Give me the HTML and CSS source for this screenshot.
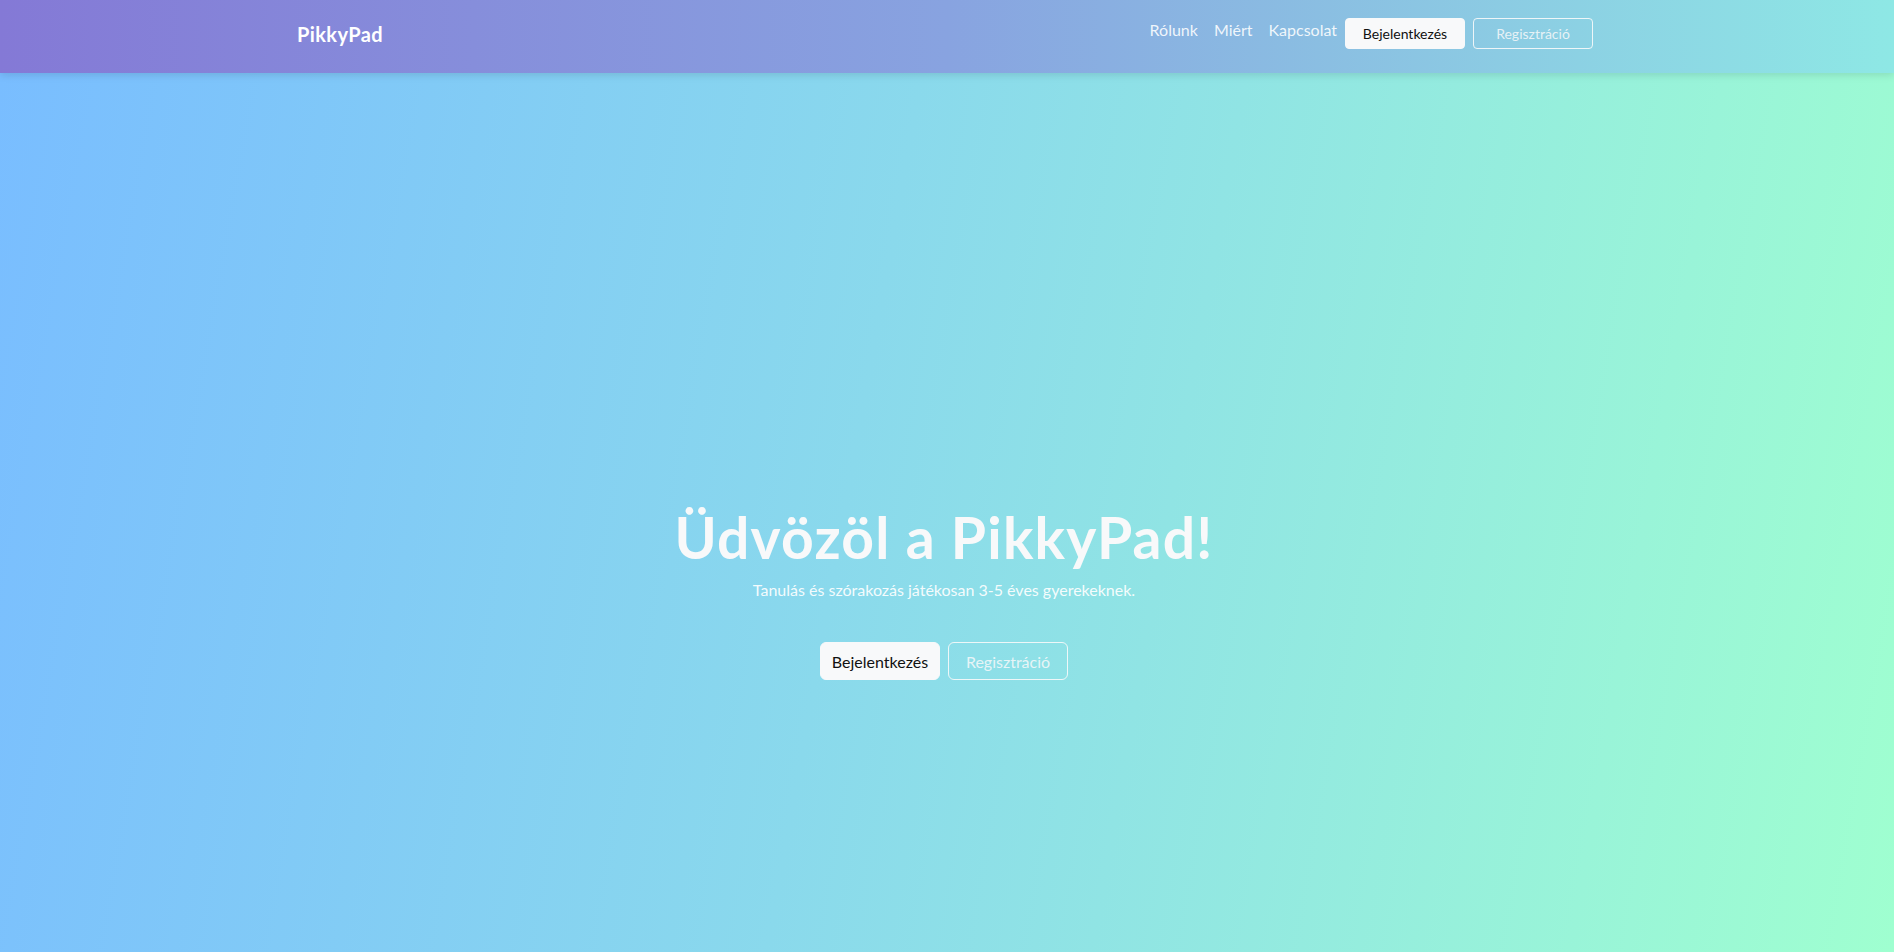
FILE: index.html
```html
<!DOCTYPE html>
<html lang="hu">
<head>
<meta charset="utf-8">
<title>PikkyPad</title>
<link rel="stylesheet" href="styles.css">
</head>
<body>
<header class="navbar">
  <div class="container nav-inner">
    <a class="brand" href="#">PikkyPad</a>
    <nav class="nav">
      <a class="nav-link" href="#">Rólunk</a>
      <a class="nav-link" href="#">Miért</a>
      <a class="nav-link" href="#">Kapcsolat</a>
      <a class="btn btn-light btn-sm" href="#">Bejelentkezés</a>
      <a class="btn btn-outline btn-sm" href="#">Regisztráció</a>
    </nav>
  </div>
</header>
<main class="hero">
  <h1 class="hero-title">Üdvözöl a PikkyPad!</h1>
  <p class="hero-lead">Tanulás és szórakozás játékosan 3-5 éves gyerekeknek.</p>
  <div class="hero-actions">
    <a class="btn btn-light btn-lg" href="#">Bejelentkezés</a>
    <a class="btn btn-outline btn-lg" href="#">Regisztráció</a>
  </div>
</main>
</body>
</html>
```
FILE: styles.css
```css
* { box-sizing: border-box; }
html, body { height: 100%; }
body {
  margin: 0;
  font-family: Lato, "Open Sans", sans-serif;
  color: #212529;
  overflow: hidden;
}
a { text-decoration: none; }

.navbar {
  position: relative;
  z-index: 2;
  height: 73px;
  background: linear-gradient(90deg, #8479d6 0%, #88a3e0 50%, #8ee8e5 100%);
  box-shadow: 0 2px 8px rgba(0, 0, 0, 0.12);
}
.container {
  width: 1320px;
  margin: 0 auto;
  padding: 0 12px;
}
.nav-inner {
  display: flex;
  justify-content: space-between;
  align-items: flex-start;
  padding-top: 18px;
}
.brand {
  margin-top: 1px;
  margin-left: -2px;
  font-size: 20px;
  line-height: 30px;
  font-weight: 700;
  letter-spacing: 0.4px;
  color: #ffffff;
}
.nav {
  display: flex;
  align-items: flex-start;
  margin-right: 2px;
}
.nav-link {
  padding: 0 8px;
  font-size: 16px;
  line-height: 24px;
  color: rgba(255, 255, 255, 0.88);
}
.btn {
  display: inline-flex;
  align-items: center;
  justify-content: center;
  width: 120px;
  border: 1px solid #f8f9fa;
  font-family: inherit;
  font-weight: 400;
}
.btn-sm {
  height: 31px;
  font-size: 14px;
  border-radius: 4px;
}
.btn-sm + .btn-sm { margin-left: 8px; }
.btn-lg {
  height: 38px;
  font-size: 16px;
  border-radius: 6px;
}
.btn-light {
  background: #f8f9fa;
  color: #111111;
}
.btn-outline {
  background: transparent;
  color: rgba(248, 249, 250, 0.85);
  border-color: rgba(248, 249, 250, 0.9);
}

.hero {
  height: calc(100vh - 73px);
  padding: 430px 6px 0 0;
  display: flex;
  flex-direction: column;
  align-items: center;
  background: linear-gradient(100deg, #79bdff 0%, #8ad9ec 45%, #9fffd0 100%);
  text-align: center;
}
.hero-title {
  margin: 0 0 7px;
  font-size: 57px;
  line-height: 1.2;
  font-weight: 700;
  letter-spacing: 1.2px;
  color: #f8f9fa;
}
.hero-lead {
  margin: 0 0 40px;
  font-size: 16px;
  line-height: 24px;
  color: rgba(255, 255, 255, 0.92);
}
.hero-actions {
  display: flex;
  gap: 8px;
}
```
